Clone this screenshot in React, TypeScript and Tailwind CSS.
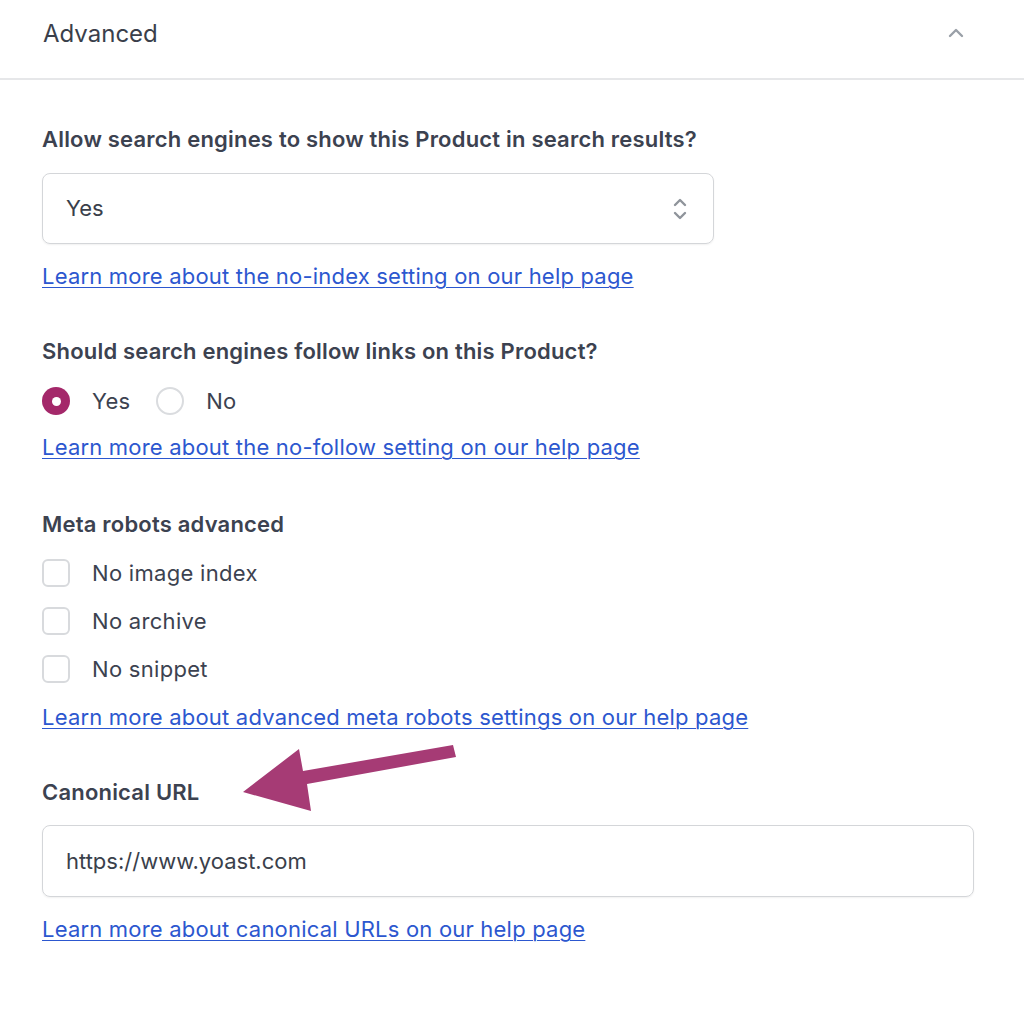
import { ChevronUp } from "lucide-react";

const LINK = "block h-7 leading-7 text-[22px] tracking-[0.2px] text-[#2c57cf] underline underline-offset-[3px] decoration-1";
const LABEL = "h-7 leading-7 text-[22px] tracking-[0.2px] font-semibold text-[#3c4250]";

function Radio({ checked, label }: { checked?: boolean; label: string }) {
  return (
    <label className="flex items-center gap-[22px]">
      {checked ? (
        <span className="w-7 h-7 rounded-full bg-[#a4286a] flex items-center justify-center">
          <span className="w-[9px] h-[9px] rounded-full bg-white" />
        </span>
      ) : (
        <span className="w-7 h-7 rounded-full border-2 border-[#dadcdf] bg-white" />
      )}
      <span className="text-[22px] leading-7 tracking-[0.2px] text-[#3c4250]">{label}</span>
    </label>
  );
}

function Checkbox({ label }: { label: string }) {
  return (
    <label className="flex items-center gap-[22px] h-7">
      <span className="w-7 h-7 rounded-md border-2 border-[#d8dadd] bg-white" />
      <span className="text-[22px] leading-7 tracking-[0.3px] text-[#3c4250]">{label}</span>
    </label>
  );
}

export default function App() {
  return (
    <div className="relative w-[1024px] h-[1012px] bg-white overflow-hidden font-['Inter',sans-serif]">
      {/* header */}
      <div className="h-[80px] border-b-2 border-[#e6e7e9] flex justify-between px-[43px] pt-[20px]">
        <h2 className="text-[24px] leading-7 text-[#3a3f4b]">Advanced</h2>
        <ChevronUp className="mr-[13px] mt-[1px] text-[#9aa0a8]" size={24} strokeWidth={2.4} />
      </div>

      <div className="pl-[42px] pt-[45px]">
        <p className={LABEL}>Allow search engines to show this Product in search results?</p>
        <div className="mt-[20px] w-[672px] h-[71px] border border-[#d4d6d9] rounded-lg shadow-[0_1px_2px_rgba(0,0,0,0.06)] flex items-center justify-between pl-[23px] pr-[26px]">
          <span className="text-[22px] text-[#3a3f4b]">Yes</span>
          <svg width="14" height="24" viewBox="0 0 14 24" fill="none" stroke="#8f949b" strokeWidth="2.4" strokeLinecap="round" strokeLinejoin="round">
            <path d="M2 8 L7 3 L12 8" />
            <path d="M2 16 L7 21 L12 16" />
          </svg>
        </div>
        <a className={`${LINK} mt-[18px] w-fit`} href="#">Learn more about the no-index setting on our help page</a>

        <p className={`${LABEL} mt-[47px]`}>Should search engines follow links on this Product?</p>
        <div className="mt-[22px] flex items-center gap-[26px]">
          <Radio checked label="Yes" />
          <Radio label="No" />
        </div>
        <a className={`${LINK} mt-[18px] w-fit`} href="#">Learn more about the no-follow setting on our help page</a>

        <p className={`${LABEL} mt-[49px]`}>Meta robots advanced</p>
        <div className="mt-[21px] flex flex-col gap-[20px]">
          <Checkbox label="No image index" />
          <Checkbox label="No archive" />
          <Checkbox label="No snippet" />
        </div>
        <a className={`${LINK} mt-[20px] w-fit`} href="#">Learn more about advanced meta robots settings on our help page</a>

        <p className={`${LABEL} mt-[47px]`}>Canonical URL</p>
        <div className="mt-[19px] w-[932px] h-[72px] border border-[#d4d6d9] rounded-lg shadow-[0_1px_2px_rgba(0,0,0,0.06)] flex items-center pl-[23px]">
          <span className="text-[22px] text-[#3a3f4b]">https://www.yoast.com</span>
        </div>
        <a className={`${LINK} mt-[18px] w-fit`} href="#">Learn more about canonical URLs on our help page</a>
      </div>

      {/* annotation arrow */}
      <svg className="absolute left-0 top-0 pointer-events-none" width="1024" height="1012" viewBox="0 0 1024 1012">
        <polygon
          points="243,792 299,749 303,771 453,745 456,757 307,784 311,811"
          fill="#a63b75"
        />
      </svg>
    </div>
  );
}
